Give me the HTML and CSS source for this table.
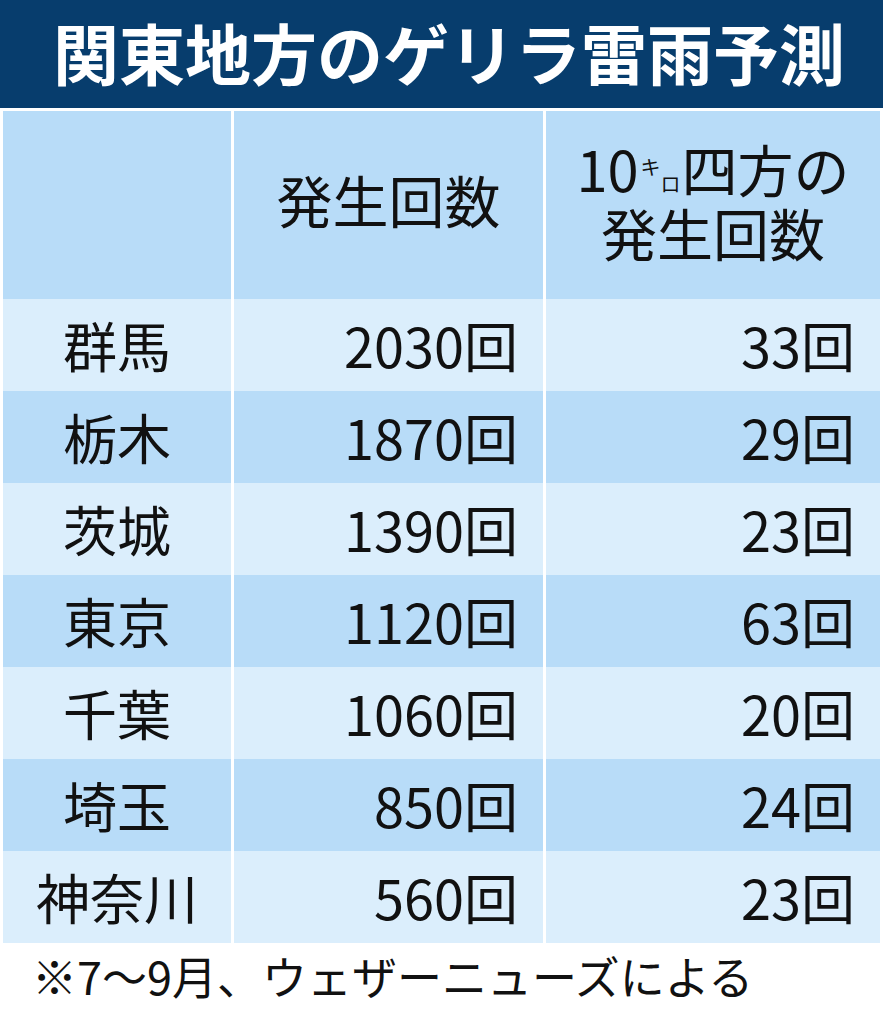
FILE: index.html
```html
<!DOCTYPE html>
<html lang="ja">
<head>
<meta charset="utf-8">
<title>関東地方のゲリラ雷雨予測</title>
<link rel="stylesheet" href="styles.css">
</head>
<body>
<div class="page">
  <header class="title-bar">
    <h1 class="title">関東地方のゲリラ雷雨予測</h1>
  </header>
  <div class="table">
    <div class="cell head"></div>
    <div class="cell head center head-text">発生回数</div>
    <div class="cell head center two-line">
      <span class="line">10<span class="unit"><span class="ki">キ</span><span class="ro">ロ</span></span>四方の</span>
      <span class="line">発生回数</span>
    </div>

    <div class="cell light name">群馬</div>
    <div class="cell light num">2030回</div>
    <div class="cell light num">33回</div>

    <div class="cell dark name">栃木</div>
    <div class="cell dark num">1870回</div>
    <div class="cell dark num">29回</div>

    <div class="cell light name">茨城</div>
    <div class="cell light num">1390回</div>
    <div class="cell light num">23回</div>

    <div class="cell dark name">東京</div>
    <div class="cell dark num">1120回</div>
    <div class="cell dark num">63回</div>

    <div class="cell light name">千葉</div>
    <div class="cell light num">1060回</div>
    <div class="cell light num">20回</div>

    <div class="cell dark name">埼玉</div>
    <div class="cell dark num">850回</div>
    <div class="cell dark num">24回</div>

    <div class="cell light name">神奈川</div>
    <div class="cell light num">560回</div>
    <div class="cell light num">23回</div>
  </div>
  <p class="note">※7～9月、ウェザーニューズによる</p>
</div>
</body>
</html>
```

FILE: styles.css
```css
html, body {
  margin: 0;
  padding: 0;
  background: #ffffff;
}

.page {
  width: 883px;
  font-family: "Noto Sans CJK JP", "Noto Sans", sans-serif;
  color: #111111;
}

.title-bar {
  height: 108px;
  background: #073d6d;
  display: flex;
  align-items: center;
  padding-left: 53px;
  margin-bottom: 3px;
}

.title {
  margin: 0;
  font-size: 66px;
  font-weight: 700;
  color: #ffffff;
  line-height: 1;
  letter-spacing: 0;
  padding-bottom: 6px;
}

.table {
  display: grid;
  grid-template-columns: 228px 309px 334px;
  grid-template-rows: 188px repeat(7, 92px);
  column-gap: 3px;
  margin-left: 3px;
  width: 877px;
}

.cell {
  display: flex;
  align-items: center;
  font-size: 54px;
  line-height: 1;
}

.head {
  background: #b8dcf8;
}

.light {
  background: #dbeefc;
}

.dark {
  background: #b8dcf8;
}

.center {
  justify-content: center;
}

.head-text {
  font-size: 56px;
  padding-bottom: 12px;
}

.two-line {
  flex-direction: column;
  justify-content: center;
  font-size: 56px;
  padding-bottom: 10px;
}

.line {
  display: block;
  line-height: 64px;
  white-space: nowrap;
}

.unit {
  display: inline-block;
  font-size: 20px;
  line-height: 1;
  margin: 0 1px 0 2px;
}

.ki {
  vertical-align: 17px;
}

.ro {
  vertical-align: 0;
}

.name {
  justify-content: center;
}

.num {
  justify-content: flex-end;
  padding-right: 25px;
}

.note {
  margin: 6px 0 0 32px;
  font-size: 45px;
  line-height: 1.2;
}
```
